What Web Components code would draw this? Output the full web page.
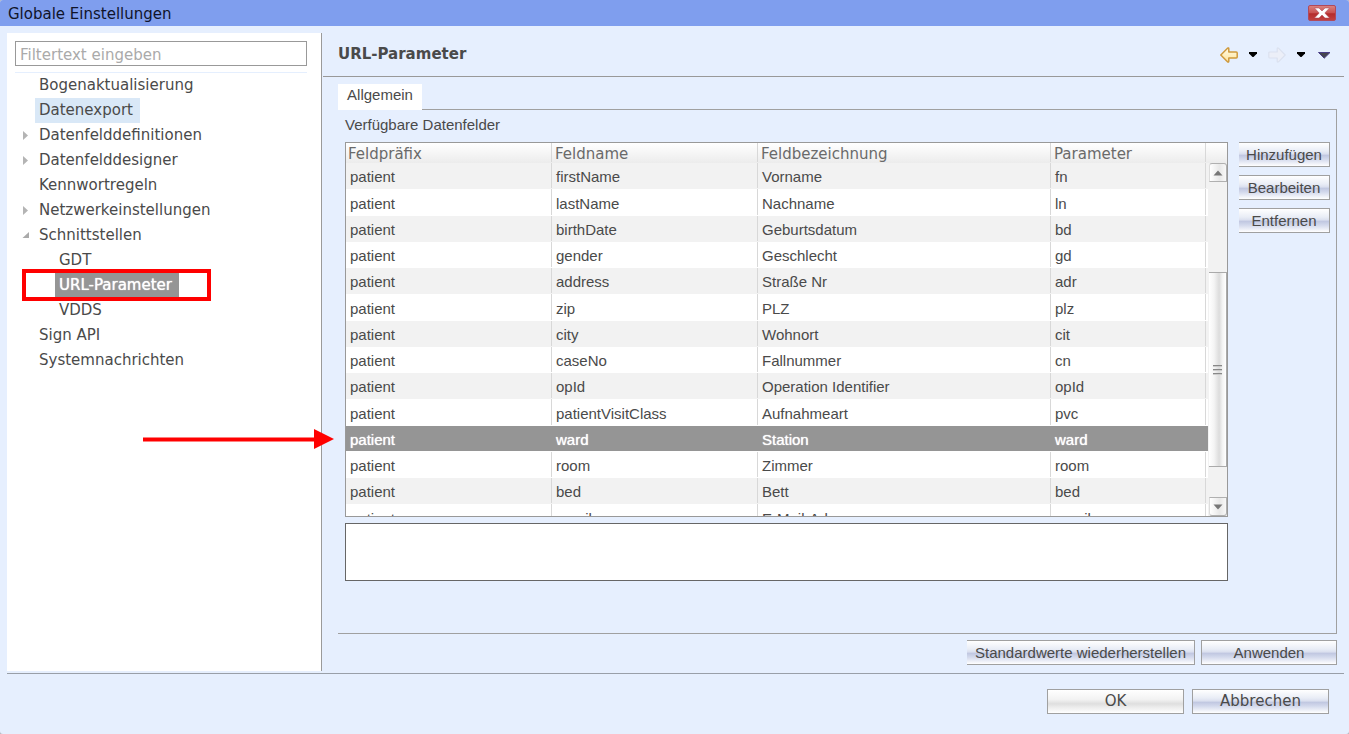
<!DOCTYPE html>
<html lang="de">
<head>
<meta charset="utf-8">
<title>Globale Einstellungen</title>
<style>
  html { background: #b4b8c0; }
  body { margin: 0; font: 15px/25px Verdana, "DejaVu Sans", sans-serif; color: #4a4a4a; }
  .dlg { --w: 137px; --face: Verdana, "DejaVu Sans", sans-serif; }
</style>
</head>
<body>
<settings-window heading="Globale Einstellungen">
  <nav-tree slot="nav">
    <tree-node>Bogenaktualisierung</tree-node>
    <tree-node hot>Datenexport</tree-node>
    <tree-node fold="closed">Datenfelddefinitionen</tree-node>
    <tree-node fold="closed">Datenfelddesigner</tree-node>
    <tree-node>Kennwortregeln</tree-node>
    <tree-node fold="closed">Netzwerkeinstellungen</tree-node>
    <tree-node fold="open">Schnittstellen</tree-node>
    <tree-node child>GDT</tree-node>
    <tree-node child selected>URL-Parameter</tree-node>
    <tree-node child>VDDS</tree-node>
    <tree-node>Sign API</tree-node>
    <tree-node>Systemnachrichten</tree-node>
  </nav-tree>
  <settings-page slot="page" heading="URL-Parameter" tab="Allgemein">
    <field-editor></field-editor>
    <push-button slot="actions" open-left style="--w:228px">Standardwerte wiederherstellen</push-button>
    <push-button slot="actions" style="--w:136px">Anwenden</push-button>
  </settings-page>
  <push-button slot="footer" class="dlg" neutral>OK</push-button>
  <push-button slot="footer" class="dlg">Abbrechen</push-button>
  <callout-marks slot="marks"></callout-marks>
</settings-window>

<script>
const define = (name, render) => customElements.define(name, class extends HTMLElement {
  connectedCallback() {
    if (this.shadowRoot) return;
    const t = document.createElement('template');
    t.innerHTML = '<style>*{box-sizing:border-box}</style>' + render(this);
    this.attachShadow({ mode: 'open' }).append(t.content.cloneNode(true));
  }
});

define('push-button', () => `
<style>
  :host { display: block; width: var(--w, 100%); }
  button { display: block; width: 100%; height: 25px; margin: 0; padding: 0; border: 1px solid #a0a0a0; border-radius: 0;
    font-size: 15px; line-height: 23px; font-family: var(--face, "Liberation Sans", Arial, sans-serif);
    color: #4a4a4a; white-space: nowrap; text-align: center;
    background: linear-gradient(#fff 0%, #e9edf6 35%, #d9deee 49%, #bfc6e0 52%, #d3d9ec 70%, #fff 100%); }
  :host([open-left]) button { border-left: 0; }
  :host([neutral]) button { background: linear-gradient(#fff 0%, #f3f3f3 40%, #dfdfdf 60%, #ececec 75%, #fff 100%); }
</style>
<button type="button"><slot></slot></button>`);

define('tree-node', el => `
<style>
  :host { display: flex; height: 25px; align-items: center; padding-left: 7px; }
  :host([child]) { padding-left: 27px; }
  i { width: 13px; height: 9px; line-height: 0; flex: none; }
  a { height: 25px; padding: 0 7px 0 4px; line-height: 24px; color: inherit; text-decoration: none; white-space: nowrap; }
  :host([hot]) a { background: #d9e8f7; }
  :host([selected]) a { background: #959595; color: #fff; text-shadow: 0 0 1px #fff; }
</style>
<i>${{ closed: '<svg width="7" height="9"><path d="M1 0L6 4.5L1 9Z" fill="#b4b4b4"/></svg>',
       open: '<svg width="7" height="9"><path d="M7 1V7H0.5Z" fill="#aaa"/></svg>' }[el.getAttribute('fold')] || ''}</i>
<a href="#"><slot></slot></a>`);

define('nav-tree', () => `
<style>
  :host { display: block; background: #fff; border-right: 1px solid #9a9a9a; padding: 8px 14px 0 8px; }
  input { display: block; width: 100%; height: 25px; margin: 0 0 6px; padding: 2px 4px 0; border: 1px solid #999; border-radius: 0;
    font: inherit; line-height: 21px; color: #4a4a4a; background: #fff; outline: 0; }
  input::placeholder { color: #aaa; opacity: 1; }
  nav { border-top: 1px solid #e5effe; }
</style>
<input type="text" aria-label="Filter" placeholder="Filtertext eingeben">
<nav><slot></slot></nav>`);

define('history-bar', () => `
<style>
  :host { display: flex; align-items: center; gap: 10px; }
  button { display: block; margin: 0; padding: 0; border: 0; background: none; line-height: 0; }
  svg { display: block; }
</style>
<button type="button" aria-label="Zurück"><svg width="18" height="16"><defs><linearGradient id="g" x1="0" y1="0" x2="0" y2="1"><stop offset="0" stop-color="#fffbe8"/><stop offset="1" stop-color="#ffe49a"/></linearGradient></defs><path d="M0.8 8L7.5 1.2Q8.8 0.4 8.8 2V5H16.2Q17.2 5 17.2 6V10Q17.2 11 16.2 11H8.8V14Q8.8 15.6 7.5 14.8Z" fill="url(#g)" stroke="#cf9a3c" stroke-width="1.5" stroke-linejoin="round"/></svg></button>
<button type="button" aria-label="Zurück-Verlauf"><svg width="10" height="8"><path d="M1 1H9V2.5L5.5 6H4.5L1 2.5Z"/></svg></button>
<button type="button" aria-label="Vor"><svg width="18" height="16"><path d="M17.2 8L10.5 1.2Q9.2 0.4 9.2 2V5H1.8Q0.8 5 0.8 6V10Q0.8 11 1.8 11H9.2V14Q9.2 15.6 10.5 14.8Z" fill="#eceff8" stroke="#dbe1ef" stroke-width="1.2" stroke-linejoin="round"/></svg></button>
<button type="button" aria-label="Vor-Verlauf"><svg width="10" height="8"><path d="M1 1H9V2.5L5.5 6H4.5L1 2.5Z"/></svg></button>
<button type="button" aria-label="Menü"><svg width="16" height="8"><path d="M2.5 1.5H14L8.2 7.2Z" fill="#45454f" stroke="#4a3f86"/></svg></button>`);

define('settings-page', el => `
<style>
  :host { display: flex; flex-direction: column; min-width: 0; }
  header { display: flex; justify-content: space-between; align-items: center; height: 44px; margin: 0 5px 0 1px;
    padding: 0 12px 0 15px; border-bottom: 1px solid #999; }
  h1 { margin: 0; font-size: 15px; line-height: 25px; font-weight: bold; }
  .tabs, .body { font-family: "Liberation Sans", Arial, sans-serif; }
  .tabs { display: flex; margin: 7px 12px 0 16px; height: 26px; }
  .tabs button { width: 84px; height: 26px; margin: 0; padding: 0 0 4px; border: 0; border-radius: 0; background: #fff; font: inherit; line-height: 22px; color: inherit; }
  .tabs span { flex: 1; border-bottom: 1px solid #a0a0a0; }
  .body { flex: 1; margin: 0 12px 6px 16px; padding: 0 6px 20px 7px; border: solid #a0a0a0; border-width: 0 1px 1px 0; }
  footer { display: flex; justify-content: flex-end; gap: 6px; margin: 0 12px 6px 0; }
</style>
<header><h1>${el.getAttribute('heading')}</h1><history-bar></history-bar></header>
<div class="tabs"><button type="button" role="tab">${el.getAttribute('tab')}</button><span></span></div>
<div class="body"><slot></slot></div>
<footer><slot name="actions"></slot></footer>`);

const FIELDS = [
  ['firstName', 'Vorname', 'fn'], ['lastName', 'Nachname', 'ln'], ['birthDate', 'Geburtsdatum', 'bd'],
  ['gender', 'Geschlecht', 'gd'], ['address', 'Straße Nr', 'adr'], ['zip', 'PLZ', 'plz'],
  ['city', 'Wohnort', 'cit'], ['caseNo', 'Fallnummer', 'cn'], ['opId', 'Operation Identifier', 'opId'],
  ['patientVisitClass', 'Aufnahmeart', 'pvc'], ['ward', 'Station', 'ward'], ['room', 'Zimmer', 'room'],
  ['bed', 'Bett', 'bed'], ['email', 'E-Mail-Adresse', 'email']
];

define('field-table', () => `
<style>
  :host { display: grid; grid-template-columns: 1fr 19px; grid-template-rows: minmax(0, 1fr); height: 375px; overflow: hidden; border: 1px solid #999; background: #fff; box-sizing: border-box; }
  table { width: 100%; border-collapse: separate; border-spacing: 0; table-layout: fixed; align-self: start; }
  .c1, .c2 { width: 206px; } .c4 { width: 155px; } .c5 { width: 2px; }
  th { height: 20px; padding: 2px 0 0 2px; font: 15px/18px Verdana, "DejaVu Sans", sans-serif; text-align: left; color: #6a6a6a; }
  thead { background: linear-gradient(#fff, #ececec); }
  th:nth-child(n+2) { padding-left: 3px; }
  th:last-child, td:last-child { padding: 0; }
  td { height: 26px; padding: 2px 0 0 4px; line-height: 24px; white-space: nowrap; }
  tr:nth-child(4n+2) td { height: 27px; padding-top: 3px; }
  tbody tr:nth-child(odd) { background: #f2f2f2; }
  th:nth-child(-n+4), td:nth-child(-n+4) { background: linear-gradient(#d8d8d8, #d8d8d8) right top / 1px calc(100% - 1px) no-repeat; }
  tbody tr.sel { background: linear-gradient(#959595, #959595) top / 100% 25px no-repeat; color: #fff; text-shadow: 0 0 1px #fff; }
  tr.sel td:nth-child(n) { background: none; }
  .bar { display: flex; flex-direction: column; background: #f2f2f2; padding-left: 1px; }
  .cap { height: 20px; margin-left: -1px; background: linear-gradient(#fff, #ececec); }
  .bar button { display: flex; align-items: center; justify-content: center; height: 19px; margin: 0; padding: 0;
    border: 1px solid #b0b0b0; border-left-color: #ddd; border-radius: 3px 3px 0 0; background: linear-gradient(90deg, #fff, #e8e8e8 60%, #f8f8f8); }
  .bar button.down { border-radius: 0 0 3px 3px; }
  .thumb { display: flex; align-items: center; justify-content: center; height: 195px; margin-top: 90px; margin-bottom: auto; border: 1px solid #aaa; border-left: 0;
    background: linear-gradient(90deg, #fff, #f4f4f4 30%, #dcdcdc 60%, #f4f4f4 80%, #fff); }
</style>
<table>
  <colgroup><col class="c1"><col class="c2"><col><col class="c4"><col class="c5"></colgroup>
  <thead><tr><th>Feldpräfix</th><th>Feldname</th><th>Feldbezeichnung</th><th>Parameter</th><th></th></tr></thead>
  <tbody>${FIELDS.map(r => `<tr${r[0] === 'ward' ? ' class="sel"' : ''}><td>patient</td>${r.map(c => `<td>${c}</td>`).join('')}<td></td></tr>`).join('')}</tbody>
</table>
<div class="bar">
  <div class="cap"></div>
  <button type="button" aria-label="Nach oben"><svg width="10" height="6"><path d="M0.5 5.5L5 0.5L9.5 5.5Z" fill="#777"/></svg></button>
  <div class="thumb"><svg width="9" height="10"><path d="M0 0.5H9M0 4.5H9M0 8.5H9" stroke="#888"/><path d="M0 1.5H9M0 5.5H9M0 9.5H9" stroke="#ccc"/></svg></div>
  <button type="button" class="down" aria-label="Nach unten"><svg width="10" height="6"><path d="M0.5 0.5L5 5.5L9.5 0.5Z" fill="#777"/></svg></button>
</div>`);

define('field-editor', () => `
<style>
  :host { display: block; }
  label { display: block; line-height: 30px; height: 32px; }
  .cols { display: grid; grid-template-columns: 1fr 91px; column-gap: 11px; }
  .side { display: flex; flex-direction: column; gap: 8px; }
  textarea { display: block; width: 100%; height: 58px; margin: 6px 0 0; border: 1px solid #666; border-radius: 0; background: #fff; resize: none; font: inherit; }
</style>
<label for="info">Verfügbare Datenfelder</label>
<div class="cols">
  <div><field-table></field-table><textarea id="info" readonly></textarea></div>
  <div class="side">
    <push-button open-left>Hinzufügen</push-button>
    <push-button open-left>Bearbeiten</push-button>
    <push-button open-left>Entfernen</push-button>
  </div>
</div>`);

define('callout-marks', () => `
<style>
  :host { display: block; pointer-events: none; }
  .frame { position: absolute; left: 22px; top: 269px; width: 189px; height: 32px; border: 4px solid #f00; }
  svg { position: absolute; left: 143px; top: 429px; }
</style>
<div class="frame"></div>
<svg width="191" height="20"><path d="M0 8.5H171V0L191 10L171 20V12.5H0Z" fill="#f00"/></svg>`);

define('settings-window', el => `
<style>
  :host { display: flex; flex-direction: column; position: relative; min-height: 100vh; background: #e6effe; border-radius: 3px; overflow: hidden; }
  .title { display: flex; justify-content: space-between; align-items: center; height: 26px; padding: 0 13px 0 8px; background: #7f9eee; color: #10142a; }
  .title span { line-height: 24px; padding-top: 2px; }
  .title button { width: 28px; height: 16px; margin: 0; padding: 0; border: 1px solid #b04a5c; border-radius: 2px; line-height: 0;
    background: linear-gradient(#d9817f, #c8504f 50%, #b42c2c 55%, #c04040); }
  .title svg { display: block; margin: 0 auto; }
  main { flex: 1; display: grid; grid-template-columns: 315px 1fr; margin: 7px 0 0 7px; }
  .rule { height: 3px; margin: 0 5px 0 7px; border-bottom: 1px solid #999fa8; }
  footer { display: flex; justify-content: flex-end; gap: 8px; padding: 15px 20px 20px; }
</style>
<div class="title"><span>${el.getAttribute('heading')}</span><button type="button" aria-label="Schließen"><svg width="18" height="12"><path d="M1.5 1H6L9 4L12 1H16.5L11.8 6L16.5 11H12L9 8L6 11H1.5L6.2 6Z" fill="#fff" stroke="#a45" stroke-width=".5"/></svg></button></div>
<main><slot name="nav"></slot><slot name="page"></slot></main>
<div class="rule"></div>
<footer><slot name="footer"></slot></footer>
<slot name="marks"></slot>`);
</script>
</body>
</html>
